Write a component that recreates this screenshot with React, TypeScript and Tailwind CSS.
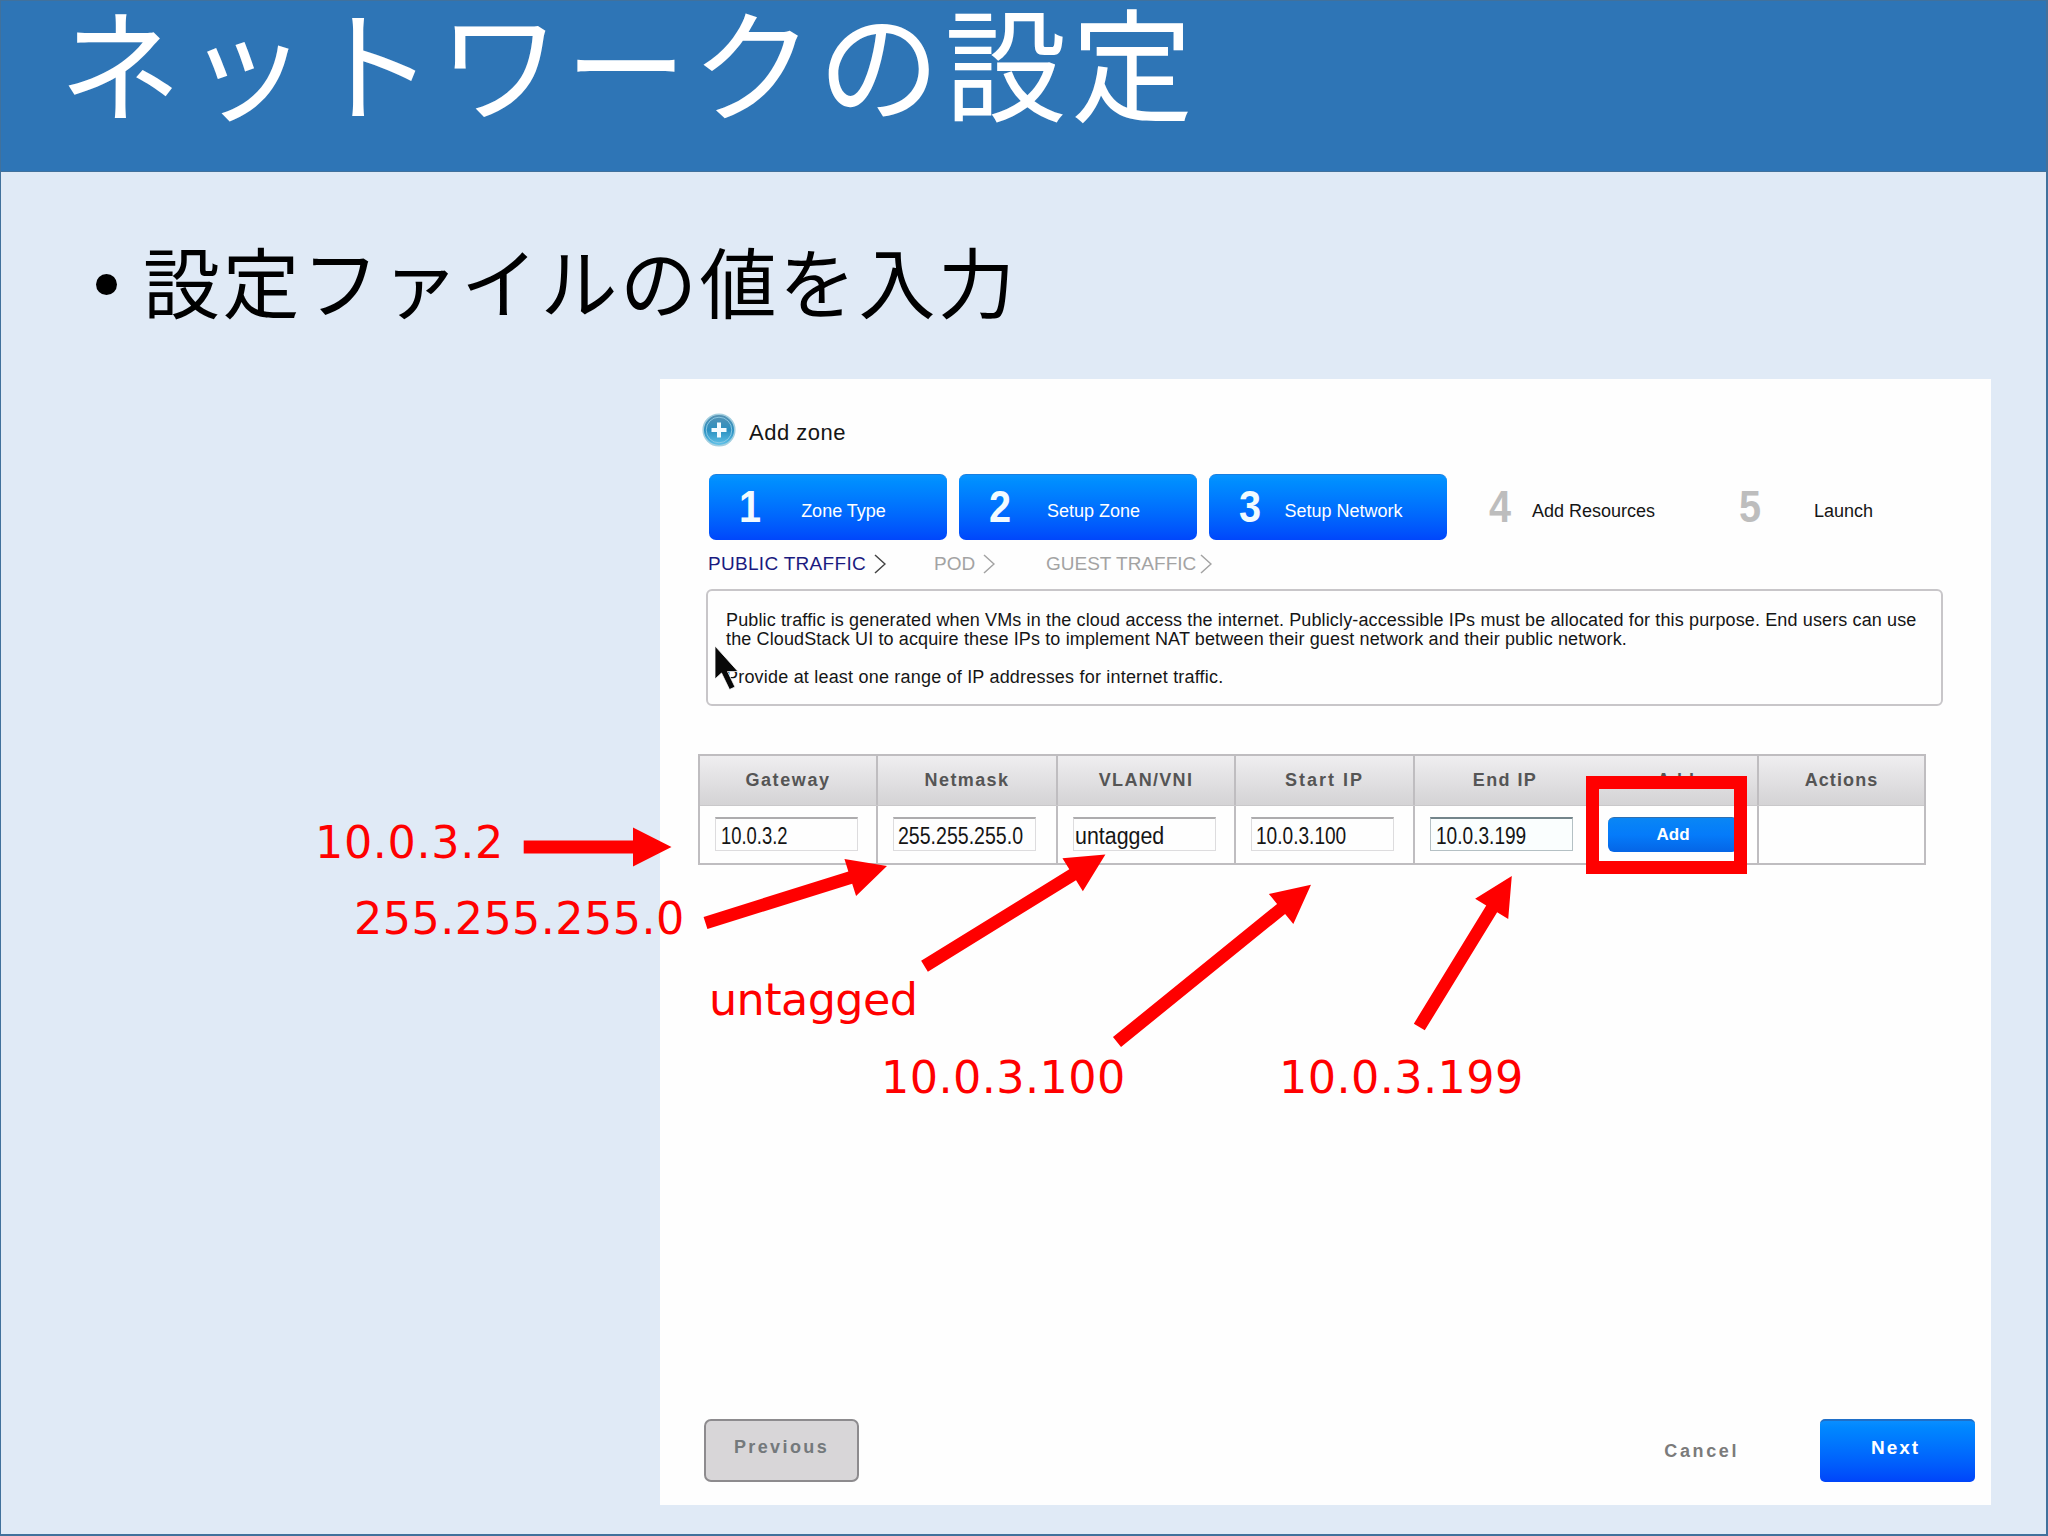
import clsx from "clsx"

interface Step {
  number: string
  label: string
  active: boolean
}

interface Column {
  title: string
  spacing: string
  value?: string
  valueClass?: string
}

interface Arrow {
  from: [number, number]
  to: [number, number]
}

const steps: Step[] = [
  { number: "1", label: "Zone Type", active: true },
  { number: "2", label: "Setup Zone", active: true },
  { number: "3", label: "Setup Network", active: true },
  { number: "4", label: "Add Resources", active: false },
  { number: "5", label: "Launch", active: false },
]

const columns: Column[] = [
  { title: "Gateway", spacing: "tracking-[1.6px]", value: "10.0.3.2", valueClass: "scale-x-[0.8]" },
  { title: "Netmask", spacing: "tracking-[1.4px]", value: "255.255.255.0", valueClass: "scale-x-[0.85] -ml-px" },
  { title: "VLAN/VNI", spacing: "tracking-[1.3px]", value: "untagged", valueClass: "scale-x-[0.93] -ml-1" },
  { title: "Start IP", spacing: "tracking-[2px]", value: "10.0.3.100", valueClass: "scale-x-[0.83] -ml-px" },
  { title: "End IP", spacing: "tracking-[1.4px]", value: "10.0.3.199", valueClass: "scale-x-[0.83]" },
  { title: "Add", spacing: "tracking-[1px]" },
  { title: "Actions", spacing: "tracking-[1.1px]" },
]

const arrows: Arrow[] = [
  { from: [523.7, 847], to: [671.5, 847] },
  { from: [705.5, 923], to: [887, 866] },
  { from: [924.5, 966.3], to: [1105.4, 854.5] },
  { from: [1117, 1042], to: [1311, 884.7] },
  { from: [1419.3, 1027], to: [1511.8, 876] },
]

function AddIcon() {
  return (
    <svg viewBox="0 0 34 34" className="w-[34px] h-[34px]">
      <defs>
        <linearGradient id="orb" x1="0" y1="0" x2="0" y2="1">
          <stop offset="0" stopColor="#5b93b3" />
          <stop offset="0.5" stopColor="#2a8fc0" />
          <stop offset="1" stopColor="#62c4ea" />
        </linearGradient>
      </defs>
      <circle cx="17" cy="17" r="15.8" fill="url(#orb)" stroke="#a3cfe0" strokeWidth="1.6" />
      <circle cx="17" cy="17" r="12.8" fill="none" stroke="#8fcbe4" strokeWidth="0.9" />
      <path d="M17 9.5v15M9.5 17h15" stroke="#f4fbff" strokeWidth="4" />
    </svg>
  )
}

function Chevron({ color }: { color: string }) {
  return (
    <svg viewBox="0 0 12 20" className="w-3 h-5 shrink-0" fill="none" stroke={color} strokeWidth="1.5">
      <path d="M1 1l10 9L1 19" />
    </svg>
  )
}

function StepBox({ number, label, active }: Step) {
  return (
    <div
      className={clsx(
        "flex items-center w-[238px] h-[66px] rounded-[7px] pl-5 pr-[31px]",
        active && "bg-linear-to-b from-[#0a94ff] to-[#0046fb] border-t border-[#1a7fe0] text-white"
      )}
    >
      <span
        className={clsx(
          "w-[42px] text-center text-[44px] leading-[62px] pb-px font-bold shrink-0 scale-x-[0.9]",
          active ? "text-[#f2fbff]" : "text-[#bdbdbd]"
        )}
      >
        {number}
      </span>
      <span className="flex-1 flex justify-center whitespace-nowrap text-[18px] leading-5 pt-[7px]">{label}</span>
    </div>
  )
}

function ArrowShape({ from, to }: Arrow) {
  const dx = to[0] - from[0]
  const dy = to[1] - from[1]
  const length = Math.hypot(dx, dy)
  const angle = (Math.atan2(dy, dx) * 180) / Math.PI
  const neck = length - 38.5
  return (
    <polygon
      transform={`translate(${from[0]} ${from[1]}) rotate(${angle})`}
      points={`0,-6.4 ${neck},-6.4 ${neck},-19.4 ${length},0 ${neck},19.4 ${neck},6.4 0,6.4`}
      fill="#ff0000"
    />
  )
}

function ZoneDialog() {
  return (
    <div className="relative flex flex-col w-[1331px] h-[1126px] bg-[#fefefe] font-['Liberation_Sans',sans-serif] text-[#151515]">
      {/* Title */}
      <div className="flex items-start gap-[13px] pt-[34px] pl-[42px]">
        <AddIcon />
        <h3 className="text-[22px] leading-[40px] tracking-[0.5px]">Add zone</h3>
      </div>

      {/* Wizard steps */}
      <div className="flex gap-3 pl-[49px] mt-[21px]">
        {steps.map((step) => (
          <StepBox key={step.number} {...step} />
        ))}
      </div>

      {/* Sub steps */}
      <div className="flex items-center h-6 mt-3 pl-[48px] text-[19px] leading-6 text-[#a3a3a3]">
        <div className="flex items-center gap-2 w-[226px] text-[#1a1a80]">
          <span className="tracking-[0.3px] whitespace-nowrap">PUBLIC TRAFFIC</span>
          <Chevron color="#444444" />
        </div>
        <div className="flex items-center gap-2 w-[112px]">
          <span>POD</span>
          <Chevron color="#a3a3a3" />
        </div>
        <div className="flex items-center gap-1">
          <span className="whitespace-nowrap">GUEST TRAFFIC</span>
          <Chevron color="#a3a3a3" />
        </div>
      </div>

      {/* Description */}
      <div className="relative ml-[46px] mt-[13px] w-[1237px] h-[117px] border-2 border-[#c8c6c9] rounded-md pt-5 pl-[18px] text-[18px] leading-[19.2px] tracking-[0.13px] whitespace-nowrap">
        <p>
          Public traffic is generated when VMs in the cloud access the internet. Publicly-accessible IPs must be
          allocated for this purpose. End users can use
          <br />
          the CloudStack UI to acquire these IPs to implement NAT between their guest network and their public network.
        </p>
        <p className="mt-[19px] tracking-[0.2px]">Provide at least one range of IP addresses for internet traffic.</p>
        <svg viewBox="0 0 26 46" className="absolute left-[6px] top-[54px] w-[26px] h-[46px]">
          <path d="M1 1v33l6.5-6 8 16.5 5.5-2.5-7.5-15.5H24z" fill="#080808" stroke="#fefefe" strokeWidth="0.8" />
        </svg>
      </div>

      {/* IP range table */}
      <div className="ml-[38px] mt-12 w-[1228px] border-2 border-[#bfbdc0]">
        <div className="grid grid-cols-[178px_180px_178px_179px_180px_164px_165px] h-[50px] bg-linear-to-b from-[#efeef0] to-[#d4d3d5] border-b border-[#c9c8ca]">
          {columns.map((column) => (
            <div
              key={column.title}
              className={clsx(
                "flex justify-center text-[18px] leading-[48px] font-bold text-[#555555]",
                column.title !== "End IP" && column.title !== "Actions" && "border-r-2 border-[#bfbdc0]",
                column.spacing
              )}
            >
              {column.title}
            </div>
          ))}
        </div>
        <div className="grid grid-cols-[178px_180px_178px_179px_180px_164px_165px] h-[57px]">
          {columns.map((column) => (
            <div
              key={column.title}
              className={clsx(
                "flex items-start pt-[11px] pl-[15px]",
                column.title !== "End IP" && column.title !== "Actions" && "border-r-2 border-[#bfbdc0]"
              )}
            >
              {column.value && (
                <div
                  className={clsx(
                    "w-[143px] h-[34px] border border-t-2 pl-[5px]",
                    column.title === "End IP"
                      ? "border-[#b4c0c4] border-t-[#74858b] bg-[#fafefe]"
                      : "border-[#dddcde] border-t-[#adacae]"
                  )}
                >
                  <span className={clsx("inline-block origin-left text-[23px] leading-[34px]", column.valueClass)}>
                    {column.value}
                  </span>
                </div>
              )}
              {column.title === "Add" && (
                <button className="w-[130px] h-[35px] -ml-0.5 rounded-md bg-linear-to-b from-[#0a86f5] via-[#057bfa] to-[#0565e6] border-t border-[#2f6fb0] text-[17px] leading-[30px] font-bold text-white">
                  Add
                </button>
              )}
            </div>
          ))}
        </div>
      </div>

      {/* Footer */}
      <div className="flex items-start mt-auto pl-[44px] pr-4 pb-[22px]">
        <button className="w-[155px] h-[63px] rounded-[7px] border-2 border-[#8d8b8e] bg-[#d8d6d8] text-[18px] leading-[53px] pb-1.5 font-bold tracking-[2.4px] text-[#74797c]">
          Previous
        </button>
        <span className="ml-auto text-[18px] leading-[64px] font-bold tracking-[2.6px] text-[#7b7b7b] mr-[81px]">
          Cancel
        </span>
        <button className="w-[155px] h-[63px] rounded-[5px] bg-linear-to-b from-[#0a8eff] to-[#0044fa] border-t-2 border-[#1f6fc8] text-[19px] leading-[51px] pr-1 pb-2 font-bold tracking-[2px] text-white">
          Next
        </button>
      </div>

      {/* Highlight around the Add button */}
      <div className="absolute left-[926px] top-[397px] w-[161px] h-[98px] border-[13px] border-[#ff0000]"></div>
    </div>
  )
}

export default function App() {
  return (
    <div className="relative flex flex-col w-[2048px] h-[1536px] bg-[#e0eaf6] border-2 border-t-0 border-l border-[#41719c] font-['Liberation_Sans','Noto_Sans_CJK_JP',sans-serif]">
      <header className="flex flex-col h-[172px] shrink-0 bg-[#2e75b6] border-y border-[#41719c] pl-[58px]">
        <h1 className="mt-[-6px] text-[122px] leading-[128px] tracking-[4.5px] font-['Noto_Sans_CJK_JP',sans-serif] text-white whitespace-nowrap">
          ネットワークの設定
        </h1>
      </header>

      <div className="flex items-center h-20 mt-[68px] pl-[95px]">
        <span className="w-[21px] h-[21px] mt-2 rounded-full bg-black"></span>
        <h2 className="ml-[26px] text-[77px] leading-[80px] tracking-[2.5px] font-['Noto_Sans_CJK_JP',sans-serif] text-black whitespace-nowrap">
          設定ファイルの値を入力
        </h2>
      </div>

      <div className="ml-[659px] mt-[59px]">
        <ZoneDialog />
      </div>

      {/* Annotations */}
      <svg viewBox="0 0 2048 1536" className="absolute -left-px top-0 w-[2048px] h-[1536px]">
        {arrows.map((arrow) => (
          <ArrowShape key={arrow.from[0]} {...arrow} />
        ))}
      </svg>
      <div className="font-['DejaVu_Sans',sans-serif] text-[44.5px] leading-[52px] text-[#ff0000] whitespace-nowrap">
        <span className="absolute left-[314px] top-[817px] tracking-[0.6px]">10.0.3.2</span>
        <span className="absolute left-[353px] top-[893px] tracking-[0.4px]">255.255.255.0</span>
        <span className="absolute left-[708px] top-[974px] tracking-[-0.6px]">untagged</span>
        <span className="absolute left-[880px] top-[1052px] tracking-[0.4px]">10.0.3.100</span>
        <span className="absolute left-[1278px] top-[1052px] tracking-[0.4px]">10.0.3.199</span>
      </div>
    </div>
  )
}
